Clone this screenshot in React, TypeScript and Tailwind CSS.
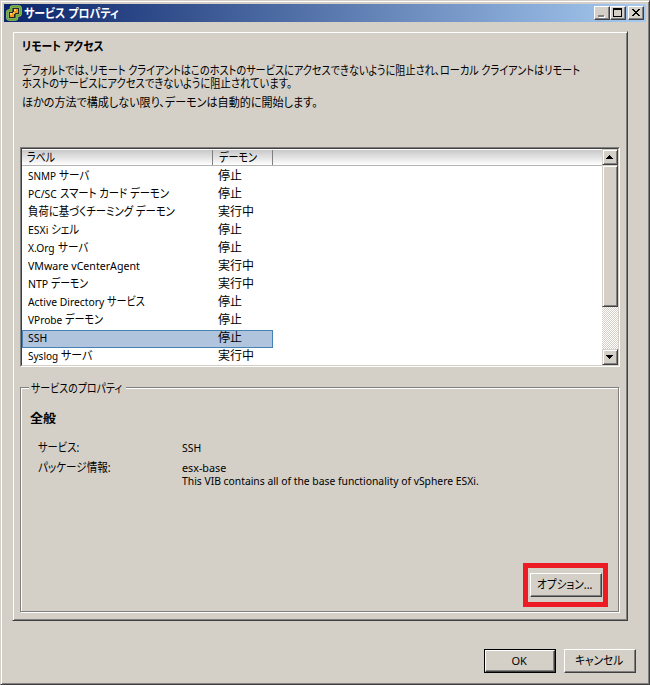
import { useLayoutEffect, useRef, useState } from 'react';
import type { ReactNode } from 'react';
import clsx from 'clsx';

type Part = [text: string, width: number];

interface Service {
  label: Part[];
  running?: boolean;
  selected?: boolean;
}

const services: Service[] = [
  { label: [['SNMP', 28], ['サーバ', 30]] },
  { label: [['PC/SC', 29], ['スマート カード デーモン', 109]] },
  { label: [['負荷に基づくチーミング デーモン', 147]], running: true },
  { label: [['ESXi', 20], ['シェル', 28]] },
  { label: [['X.Org', 27], ['サーバ', 30]] },
  { label: [['VMware vCenterAgent', 112]], running: true },
  { label: [['NTP', 20], ['デーモン', 37]], running: true },
  { label: [['Active Directory', 76], ['サービス', 38]] },
  { label: [['VProbe', 34], ['デーモン', 38]] },
  { label: [['SSH', 19]], selected: true },
  { label: [['Syslog', 30], ['サーバ', 31]], running: true },
];

const raised =
  'border border-t-[#d4d0c8] border-l-[#d4d0c8] border-r-[#404040] border-b-[#404040] shadow-[inset_1px_1px_0_#fff,inset_-1px_-1px_0_#808080]';
const button =
  'border border-t-white border-l-white border-r-[#404040] border-b-[#404040] shadow-[inset_-1px_-1px_0_#808080]';

// Condenses a run of text to a fixed width, like the narrow UI kana
function Fit({ text, width, className }: { text: string; width: number; className?: string }) {
  const ref = useRef<HTMLSpanElement>(null);
  const [scale, setScale] = useState(1);

  useLayoutEffect(() => {
    if (ref.current) setScale(width / ref.current.offsetWidth);
  }, [text, width]);

  return (
    <span className={clsx('inline-flex shrink-0 whitespace-pre', className)} style={{ width }}>
      <span ref={ref} className="block shrink-0 origin-left" style={{ transform: `scaleX(${scale})` }}>
        {text}
      </span>
    </span>
  );
}

function AppIcon() {
  const outline =
    'M7 1.5h5.500q2 0 2 2v5q0 2-2 2h-1.500v2q0 2-2 2h-5.500q-2 0-2-2v-5q0-2 2-2h1.500v-2q0-2 2-2z';

  return (
    <svg width="16" height="16" viewBox="0 0 16 16" className="shrink-0">
      <path d={outline} fill="#23282e" stroke="#a9d47c" strokeWidth="2.6" />
      <path d={outline} fill="none" stroke="#6aa52c" strokeWidth="1.4" />
      <path d="M8 4h4v4h-4zM4 8h4v4h-4z" fill="#f7941e" />
      <path d="M8 4h2v2h-2zM4 8h2v2h-2z" fill="#ffd27a" />
      <path d="M7 7h2v2h-2z" fill="#ffb52e" />
    </svg>
  );
}

function CaptionButton({ children }: { children: ReactNode }) {
  return (
    <button className={clsx('block h-3.5 w-4 bg-[#d4d0c8]', button)}>
      <svg width="14" height="12" viewBox="0 0 14 12" shapeRendering="crispEdges">
        {children}
      </svg>
    </button>
  );
}

function TitleBar() {
  return (
    <div className="flex h-[18px] shrink-0 items-center bg-linear-to-r/srgb from-[#0a246a] to-[#a6caf0] px-0.5">
      <AppIcon />
      <Fit text="サービス プロパティ" width={95} className="mt-0.5 mr-auto ml-0.5 font-bold text-white" />
      <CaptionButton>
        <path d="M4 9h6v2h-6z" fill="#fff" />
        <path d="M3 8h6v2h-6z" fill="#808080" />
      </CaptionButton>
      <CaptionButton>
        <path d="M2 1h9v9h-9zM3 3v6h7v-6z" fillRule="evenodd" fill="#000" />
      </CaptionButton>
      <div className="ml-0.5">
        <CaptionButton>
          <path
            d="M3 2h2v1h1v1h2v-1h1v-1h2v1h-1v1h-1v1h-1v1h1v1h1v1h1v1h-2v-1h-1v-1h-2v1h-1v1h-2v-1h1v-1h1v-1h1v-1h-1v-1h-1v-1h-1z"
            fill="#000"
          />
        </CaptionButton>
      </div>
    </div>
  );
}

function ScrollBar() {
  return (
    <div className="flex w-4 shrink-0 flex-col bg-[repeating-conic-gradient(#fff_0_25%,#d4d0c8_0_50%)] bg-[length:2px_2px]">
      <div className={clsx('h-4 bg-[#d4d0c8]', raised)}>
        <svg width="14" height="14" shapeRendering="crispEdges">
          <path d="M6 5h1v1h1v1h1v1h1v1h-7v-1h1v-1h1v-1h1z" />
        </svg>
      </div>
      <div className={clsx('h-[142px] bg-[#d4d0c8]', raised)} />
      <div className={clsx('mt-auto h-4 bg-[#d4d0c8]', raised)}>
        <svg width="14" height="14" shapeRendering="crispEdges">
          <path d="M3 5h7v1h-1v1h-1v1h-1v1h-1v-1h-1v-1h-1v-1h-1z" />
        </svg>
      </div>
    </div>
  );
}

function ServiceList() {
  return (
    <div className="h-[220px] border border-t-[#808080] border-r-white border-b-white border-l-[#808080]">
      <div className="flex h-[218px] border border-t-[#404040] border-r-[#d4d0c8] border-b-[#d4d0c8] border-l-[#404040] bg-white">
        <div className="h-full grow overflow-hidden">
          <div className="mb-0.5 flex h-[17px] border-t border-b border-t-white border-b-[#b4b4b4] bg-linear-to-b from-[#c8c8c8] to-white leading-4">
            <div className="w-[191px] border-r border-[#808080] pl-[5px]">
              <Fit text="ラベル" width={28} />
            </div>
            <div className="w-[60px] border-r border-[#808080] pl-1.5">
              <Fit text="デーモン" width={38} />
            </div>
          </div>
          {services.map(({ label, running, selected }) => (
            <div
              key={label[0][0]}
              className={clsx(
                'flex h-[18px] w-[251px] items-center border pb-0.5 pl-[5px]',
                selected ? 'border-[#4682b4] bg-[#b0c4de]' : 'border-transparent',
              )}
            >
              <div className="flex w-[190px] items-baseline gap-[3px]">
                {label.map(([text, width]) => (
                  <Fit key={text} text={text} width={width} className={/^[A-Z]/.test(text) ? 'text-[11px]' : ''} />
                ))}
              </div>
              <Fit text={running ? '実行中' : '停止'} width={running ? 36 : 24} />
            </div>
          ))}
        </div>
        <ScrollBar />
      </div>
    </div>
  );
}

function ServiceProperties() {
  return (
    <div className="mt-5 mr-px flex h-[225px] flex-col border border-[#808080] pl-[9px] shadow-[1px_1px_0_#fff,inset_1px_1px_0_#fff]">
      <div className="-mt-2 -ml-px flex h-4 w-[97px] items-center bg-[#d4d0c8] pt-0.5 pl-0.5">
        <Fit text="サービスのプロパティ" width={91} />
      </div>
      <Fit text="全般" width={26} className="mt-4 font-bold" />
      <div className="mt-[15px] ml-2 grid grid-cols-[144px_1fr] leading-[13px]">
        <Fit text="サービス:" width={41} />
        <Fit text="SSH" width={19} className="text-[11px]" />
        <Fit text="パッケージ情報:" width={73} className="mt-[7px]" />
        <div className="mt-[7px] flex flex-col text-[11px]">
          <Fit text="esx-base" width={44} />
          <Fit text="This VIB contains all of the base functionality of vSphere ESXi." width={297} />
        </div>
      </div>
      <div className="mt-auto mr-2.5 mb-1 self-end border-5 border-[#ed1c24] pt-[5px] pr-[1px] pb-[5px] pl-0.5">
        <button className={clsx('flex h-6 w-[72px] items-center justify-center pr-[3px]', button)}>
          <Fit text="オプション..." width={55} />
        </button>
      </div>
    </div>
  );
}

export default function App() {
  return (
    <div
      className={clsx(
        'flex h-[685px] w-[650px] flex-col overflow-hidden bg-[#d4d0c8] p-[3px] text-xs leading-[14px] text-black [font-family:"Noto_Sans","Noto_Sans_CJK_JP",sans-serif] [font-feature-settings:"palt"]',
        raised,
      )}
    >
      <TitleBar />
      <div className={clsx('mt-[9px] mr-[18px] ml-2 flex h-[590px] shrink-0 flex-col px-[7px] pt-2 pb-2', raised)}>
        <Fit text="リモート アクセス" width={82} className="ml-0.5 font-bold" />
        <div className="mt-[10px] ml-0.5 flex flex-col leading-[13px]">
          <Fit
            text="デフォルトでは、リモート クライアントはこのホストのサービスにアクセスできないように阻止され、ローカル クライアントはリモート"
            width={558}
          />
          <Fit text="ホストのサービスにアクセスできないように阻止されています。" width={270} />
          <Fit text="ほかの方法で構成しない限り、デーモンは自動的に開始します。" width={296} className="mt-[6px]" />
        </div>
        <div className="mt-auto">
          <ServiceList />
          <ServiceProperties />
        </div>
      </div>
      <div className="mt-7 mr-2.5 flex justify-end gap-2">
        <button className="h-6 w-[72px] border border-black">
          <span className={clsx('flex h-full items-center justify-center pr-0.5', button)}>
            <Fit text="OK" width={15} className="text-[11px]" />
          </span>
        </button>
        <button className={clsx('flex h-6 w-[72px] items-center justify-center pr-0.5', button)}>
          <Fit text="キャンセル" width={48} />
        </button>
      </div>
    </div>
  );
}
